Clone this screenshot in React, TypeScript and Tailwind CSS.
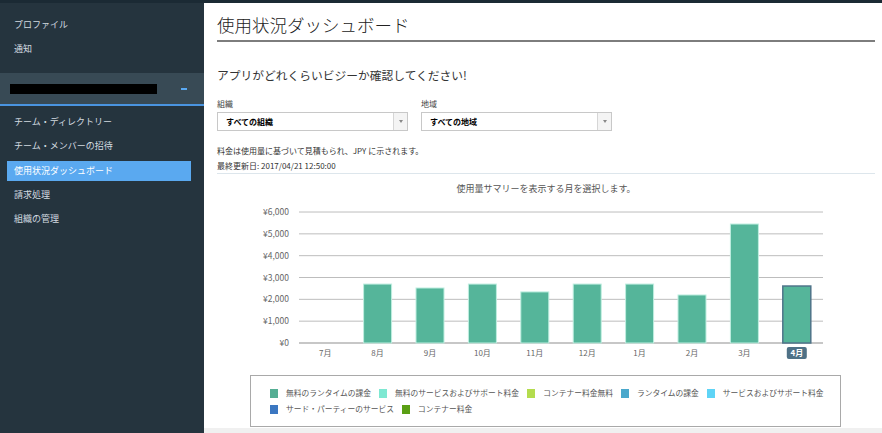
import React from 'react'

const font = { fontFamily: '"Noto Sans CJK JP", "Liberation Sans", sans-serif' }

const months = [
  { m: '7月', v: 0 },
  { m: '8月', v: 2700 },
  { m: '9月', v: 2520 },
  { m: '10月', v: 2700 },
  { m: '11月', v: 2340 },
  { m: '12月', v: 2700 },
  { m: '1月', v: 2700 },
  { m: '2月', v: 2200 },
  { m: '3月', v: 5450 },
  { m: '4月', v: 2610 },
]

const legend = [
  ['#55ae94', '無料のランタイムの課金'],
  ['#7ee8d2', '無料のサービスおよびサポート料金'],
  ['#b4dc4e', 'コンテナー料金無料'],
  ['#4aa8cc', 'ランタイムの課金'],
  ['#5fd4f6', 'サービスおよびサポート料金'],
  ['#3b77c1', 'サード・パーティーのサービス'],
  ['#5a9f14', 'コンテナー料金'],
]

function Sidebar() {
  return (
    <div className="w-[204px] shrink-0 bg-[#25343e] text-[9px] text-[#d3dbe0]">
      <div className="pt-[15px]">
        <div className="h-6 pl-[14px] leading-[14px]">プロファイル</div>
        <div className="h-6 pl-[14px] leading-[14px]">通知</div>
      </div>
      <div className="mt-[7px] flex h-[31px] items-center justify-between bg-[#384a55] pl-[10px] pr-[17px]">
        <div className="h-[10px] w-[147px] bg-black" />
        <div className="h-[2px] w-[6px] bg-[#5aa9f2]" />
      </div>
      <div className="h-[2px] bg-[#4a94e0]" />
      <div className="pt-[4px]">
        <div className="h-6 pl-[14px] leading-6">チーム・ディレクトリー</div>
        <div className="h-6 pl-[14px] leading-6">チーム・メンバーの招待</div>
        <div className="ml-[7px] mr-[13px] mt-[3px] h-5 bg-[#5aa9f0] pl-[7px] leading-5 text-white">使用状況ダッシュボード</div>
        <div className="h-6 pl-[14px] pt-[2px] leading-6">請求処理</div>
        <div className="h-6 pl-[14px] pt-[2px] leading-6">組織の管理</div>
      </div>
    </div>
  )
}

function Select({ label, value }: { label: string; value: string }) {
  return (
    <div className="w-[191px]">
      <div className="h-[12px] text-[8px] leading-[12px] text-[#444]">{label}</div>
      <div className="mt-[2px] flex h-[19px] border border-[#c8c8c8] bg-white">
        <div className="flex-1 pl-[8px] text-[8px] font-bold leading-[17px] text-black">{value}</div>
        <div className="flex w-[14px] items-center justify-center border-l border-[#d6d6d6] bg-[#f4f4f4]">
          <div className="h-0 w-0 border-x-[2px] border-t-[3px] border-x-transparent border-t-[#888]" />
        </div>
      </div>
    </div>
  )
}

function Chart() {
  const x0 = 82
  const w = 524
  const step = w / 10
  const yBase = 148
  const per = 21.83 / 1000
  return (
    <svg width="658" height="166" className="block">
      {[0, 1, 2, 3, 4, 5, 6].map((i) => {
        const y = yBase - i * 1000 * per
        return (
          <g key={i}>
            <line x1={x0} x2={x0 + w} y1={y} y2={y} stroke={i === 0 ? '#b5b5b5' : '#bdbdbd'} strokeWidth={i === 0 ? 1.5 : 1} />
            <text x={72} y={y + 3} textAnchor="end" fontSize="8.5" fill="#666" style={font}>
              {i === 0 ? '¥0' : `¥${i},000`}
            </text>
          </g>
        )
      })}
      {months.map((d, i) => {
        const cx = x0 + step * (i + 0.5)
        const h = d.v * per
        const sel = i === 9
        return (
          <g key={d.m}>
            {d.v > 0 && (
              <rect
                x={cx - 14}
                y={yBase - h}
                width={28}
                height={h}
                fill="#55b59a"
                stroke={sel ? '#4f7489' : '#bfeee0'}
                strokeWidth={sel ? 1.5 : 1}
              />
            )}
            {sel && <rect x={cx - 10} y={152} width={20} height={12} rx={2} fill="#4f7186" />}
            <text x={cx} y={161} textAnchor="middle" fontSize="8" fill={sel ? '#fff' : '#666'} fontWeight={sel ? 700 : 400} style={font}>
              {d.m}
            </text>
          </g>
        )
      })}
    </svg>
  )
}

function Legend() {
  return (
    <div className="ml-[33px] mt-[14px] h-[52px] w-[591px] border border-[#a9a9a9] pl-[19px] pr-[8px] pt-[9px]">
      <div className="flex flex-wrap gap-x-[8px] text-[7.75px] leading-[16px] text-[#555]">
        {legend.map(([c, t]) => (
          <div key={t} className="flex items-center gap-[8px]">
            <div className="h-[9px] w-[8px]" style={{ backgroundColor: c }} />
            <span>{t}</span>
          </div>
        ))}
      </div>
    </div>
  )
}

export default function App() {
  return (
    <div className="flex h-[433px] w-[882px] flex-col overflow-hidden bg-[#1b2a34]" style={font}>
      <div className="h-[3px] shrink-0" />
      <div className="flex min-h-0 flex-1">
        <Sidebar />
        <div className="flex flex-1 flex-col bg-white">
          <div className="flex-1 pl-[13px] pr-[7px]">
            <div className="pt-[10px] text-[17.5px] font-light leading-[24px] text-[#222]">使用状況ダッシュボード</div>
            <div className="mt-[3px] h-[2px] bg-[#7d7d7d]" />
            <div className="mt-[24px] text-[11.75px] leading-[18px] text-[#333]">アプリがどれくらいビジーか確認してください!</div>
            <div className="mt-[14px] flex gap-[13px]">
              <Select label="組織" value="すべての組織" />
              <Select label="地域" value="すべての地域" />
            </div>
            <div className="mt-[13px] text-[8px] leading-[14px] text-[#333]">料金は使用量に基づいて見積もられ、JPY に示されます。</div>
            <div className="mt-[1px] text-[8px] leading-[14px] text-[#333]">最終更新日: 2017/04/21 12:50:00</div>
            <div className="h-px bg-[#dde6ec]" />
            <div className="mt-[9px] text-center text-[9px] leading-[12px] text-[#555]">使用量サマリーを表示する月を選択します。</div>
            <Chart />
            <Legend />
          </div>
          <div className="h-[5px] shrink-0 bg-[#f0f0f0]" />
        </div>
      </div>
    </div>
  )
}
